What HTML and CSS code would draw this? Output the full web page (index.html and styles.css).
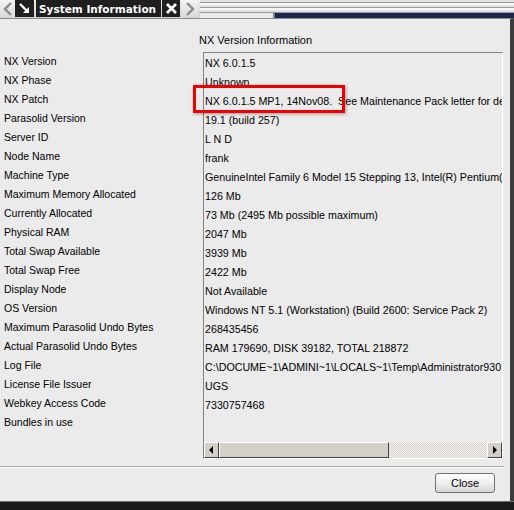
FILE: index.html
```html
<!DOCTYPE html>
<html>
<head>
<meta charset="utf-8">
<link rel="stylesheet" href="styles.css">
</head>
<body>
<div class="screen">
  <div class="topbar">
    <div class="nav nav-left">
      <svg width="10" height="14" viewBox="0 0 10 14"><path d="M8 1 L2 7 L8 13" fill="none" stroke="#8a8a8a" stroke-width="2.4"/></svg>
    </div>
    <div class="tab tab-icon">
      <svg width="14" height="14" viewBox="0 0 14 14"><path d="M2 2 L10 10" stroke="#fff" stroke-width="2.4"/><path d="M5 11 L11 11 L11 5 Z" fill="#fff"/></svg>
    </div>
    <div class="tab tab-title">System Information</div>
    <div class="tab tab-close">
      <svg width="13" height="13" viewBox="0 0 13 13"><path d="M2 2 L11 11 M11 2 L2 11" stroke="#fff" stroke-width="2.8"/></svg>
    </div>
    <div class="nav nav-right">
      <svg width="10" height="14" viewBox="0 0 10 14"><path d="M2 1 L8 7 L2 13" fill="none" stroke="#8a8a8a" stroke-width="2.4"/></svg>
    </div>
    <div class="rail">
      <div class="rail-lines"></div>
      <div class="rail-bottom">
        <div class="rail-gap"></div>
        <div class="rail-navy"></div>
      </div>
    </div>
  </div>

  <div class="panel">
    <div class="main">
      <div class="labels">
        <div class="row">NX Version</div>
        <div class="row">NX Phase</div>
        <div class="row">NX Patch</div>
        <div class="row">Parasolid Version</div>
        <div class="row">Server ID</div>
        <div class="row">Node Name</div>
        <div class="row">Machine Type</div>
        <div class="row">Maximum Memory Allocated</div>
        <div class="row">Currently Allocated</div>
        <div class="row">Physical RAM</div>
        <div class="row">Total Swap Available</div>
        <div class="row">Total Swap Free</div>
        <div class="row">Display Node</div>
        <div class="row">OS Version</div>
        <div class="row">Maximum Parasolid Undo Bytes</div>
        <div class="row">Actual Parasolid Undo Bytes</div>
        <div class="row">Log File</div>
        <div class="row">License File Issuer</div>
        <div class="row">Webkey Access Code</div>
        <div class="row">Bundles in use</div>
      </div>
      <div class="right">
        <div class="heading">NX Version Information</div>
        <div class="box">
          <div class="values">
            <div class="row">NX 6.0.1.5</div>
            <div class="row">Unknown</div>
            <div class="row">NX 6.0.1.5 MP1, 14Nov08.&nbsp; See Maintenance Pack letter for details</div>
            <div class="row">19.1 (build 257)</div>
            <div class="row">L N D</div>
            <div class="row">frank</div>
            <div class="row">GenuineIntel Family 6 Model 15 Stepping 13, Intel(R) Pentium(R) Dual CPU</div>
            <div class="row">126 Mb</div>
            <div class="row">73 Mb (2495 Mb possible maximum)</div>
            <div class="row">2047 Mb</div>
            <div class="row">3939 Mb</div>
            <div class="row">2422 Mb</div>
            <div class="row">Not Available</div>
            <div class="row">Windows NT 5.1 (Workstation) (Build 2600: Service Pack 2)</div>
            <div class="row">268435456</div>
            <div class="row">RAM 179690, DISK 39182, TOTAL 218872</div>
            <div class="row">C:\DOCUME~1\ADMINI~1\LOCALS~1\Temp\Administrator930.syslog</div>
            <div class="row">UGS</div>
            <div class="row">7330757468</div>
          </div>
          <div class="hscroll">
            <div class="sbtn"><svg width="5" height="8" viewBox="0 0 5 8"><path d="M4 0 L0 4 L4 8 Z" fill="#000"/></svg></div>
            <div class="thumb"></div>
            <div class="track"></div>
            <div class="sbtn"><svg width="5" height="8" viewBox="0 0 5 8"><path d="M1 0 L5 4 L1 8 Z" fill="#000"/></svg></div>
          </div>
        </div>
      </div>
    </div>
    <div class="separator"></div>
    <div class="footer">
      <button class="close-btn">Close</button>
    </div>
    <div class="highlight"></div>
  </div>
  <div class="taskbar"></div>
</div>
</body>
</html>
```

FILE: styles.css
```css
html, body {
  margin: 0;
  padding: 0;
  background: #ebebeb;
}
.screen {
  width: 514px;
  height: 510px;
  overflow: hidden;
  display: flex;
  flex-direction: column;
  font-family: "Liberation Sans", Arial, sans-serif;
  font-size: 10.5px;
  color: #000;
}
.topbar {
  height: 18px;
  display: flex;
  background: linear-gradient(#f0f0f0, #cfcfcf);
  flex-shrink: 0;
}
.nav {
  width: 15px;
  display: flex;
  align-items: center;
  justify-content: center;
  background: linear-gradient(#f4f4f4, #d8d8d8);
}
.nav-right {
  width: 17px;
  margin-left: 1px;
}
.tab {
  background: #1f1f1f;
  color: #fff;
  display: flex;
  align-items: center;
  height: 17px;
}
.tab-icon {
  width: 19px;
  justify-content: center;
  margin-right: 2px;
}
.tab-title {
  width: 122px;
  padding-left: 3px;
  font-family: "DejaVu Sans", sans-serif;
  font-weight: bold;
  font-size: 10.5px;
  white-space: nowrap;
  overflow: hidden;
  margin-right: 1px;
}
.tab-close {
  width: 18px;
  justify-content: center;
}
.rail {
  flex: 1;
  display: flex;
  flex-direction: column;
  margin-left: 2px;
}
.rail-lines {
  height: 13px;
  background: repeating-linear-gradient(#e2e2e2 0 2px, #9a9a9a 2px 3px, #f6f6f6 3px 5px);
}
.rail-bottom {
  flex: 1;
  display: flex;
}
.rail-gap {
  width: 73px;
  background: #eaeaea;
  border-right: 2px solid #7d7d7d;
}
.rail-navy {
  flex: 1;
  background: #1e2650;
}
.panel {
  position: relative;
  flex: 1;
  display: flex;
  flex-direction: column;
  background: #ebebeb;
  border-top: 1px solid #8c8c8c;
  border-right: 4px solid #3c3c3c;
}
.main {
  display: flex;
  padding-top: 14px;
}
.labels {
  width: 195px;
  padding-left: 4px;
  padding-top: 19px;
}
.row {
  height: 19px;
  line-height: 19px;
  white-space: nowrap;
}
.right {
  display: flex;
  flex-direction: column;
  width: 304px;
}
.heading {
  height: 19px;
  line-height: 14px;
  font-size: 11px;
}
.box {
  margin-left: 4px;
  height: 405px;
  border-top: 1px solid #828282;
  border-left: 1px solid #828282;
  border-bottom: 1px solid #fff;
  border-right: 1px solid #fff;
  display: flex;
  flex-direction: column;
  overflow: hidden;
}
.values {
  flex: 1;
  padding-left: 1px;
  padding-top: 1px;
  overflow: hidden;
  font-size: 10.7px;
}
.hscroll {
  height: 16px;
  display: flex;
  background: #d4d0c8;
}
.sbtn {
  width: 13px;
  height: 14px;
  border-top: 1px solid #fff;
  border-left: 1px solid #fff;
  border-right: 1px solid #404040;
  border-bottom: 1px solid #404040;
  background: #d4d0c8;
  display: flex;
  align-items: center;
  justify-content: center;
}
.thumb {
  width: 168px;
  height: 14px;
  border-top: 1px solid #fff;
  border-left: 1px solid #fff;
  border-right: 1px solid #404040;
  border-bottom: 1px solid #404040;
  background: #d4d0c8;
}
.track {
  flex: 1;
  background-color: #ebebeb;
  background-image: repeating-conic-gradient(#d4d0c8 0 25%, #f4f4f4 0 50%);
  background-size: 2px 2px;
}
.separator {
  margin-top: 7px;
  height: 1px;
  background: #a8a8a8;
  border-bottom: 1px solid #fff;
  margin-right: 6px;
}
.footer {
  display: flex;
  justify-content: flex-end;
  padding-top: 5px;
  padding-right: 15px;
}
.close-btn {
  width: 60px;
  height: 20px;
  border: 1px solid #707070;
  border-radius: 3px;
  background: linear-gradient(#ffffff, #f0f0f0 50%, #d6d6d6);
  font-family: "Liberation Sans", Arial, sans-serif;
  font-size: 11px;
  color: #000;
  padding: 0;
}
.highlight {
  position: absolute;
  left: 193px;
  top: 66px;
  width: 146px;
  height: 22px;
  border: 3px solid #f00000;
  box-shadow: 1px 1px 3px rgba(0,0,0,0.35);
}
.taskbar {
  height: 8px;
  background: #1a1a1a;
  border-top: 1px solid #707070;
  flex-shrink: 0;
}
```
